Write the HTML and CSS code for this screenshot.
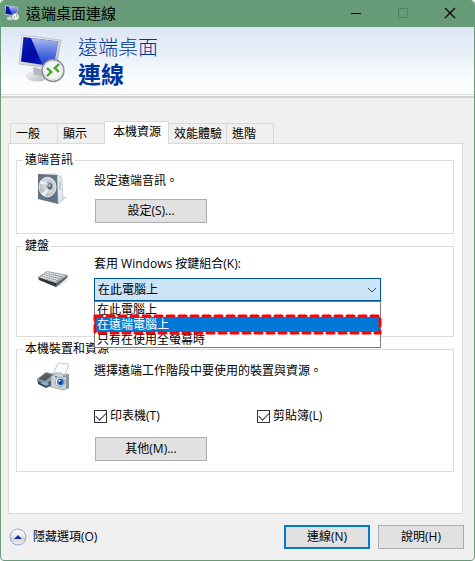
FILE: index.html
```
<!DOCTYPE html>
<html lang="zh-Hant">
<head>
  <meta charset="UTF-8">
  <title>遠端桌面連線</title>
  <link rel="stylesheet" href="styles.css">
</head>
<body>

  <svg class="defs" width="0" height="0" aria-hidden="true">
    <defs>
      <linearGradient id="screen" x1="0" y1="0" x2="1" y2="1">
        <stop offset="0" stop-color="#0a23b8"/>
        <stop offset="0.5" stop-color="#0008a0"/>
        <stop offset="1" stop-color="#1c3fd0"/>
      </linearGradient>
      <linearGradient id="shine" x1="0" y1="0" x2="0" y2="1">
        <stop offset="0" stop-color="#dce7ff"/>
        <stop offset="0.5" stop-color="#6c8cf0"/>
        <stop offset="1" stop-color="#1c3cd8"/>
      </linearGradient>
      <linearGradient id="metal" x1="0" y1="0" x2="1" y2="1">
        <stop offset="0" stop-color="#f4f4f4"/>
        <stop offset="1" stop-color="#b4b8bd"/>
      </linearGradient>
      <radialGradient id="cone" cx="0.6" cy="0.4" r="0.7">
        <stop offset="0" stop-color="#8d959b"/>
        <stop offset="0.4" stop-color="#d5d8da"/>
        <stop offset="1" stop-color="#aab0b5"/>
      </radialGradient>
      <linearGradient id="knob" x1="0" y1="0" x2="0" y2="1">
        <stop offset="0" stop-color="#ffffff"/>
        <stop offset="0.5" stop-color="#e3e5ec"/>
        <stop offset="0.55" stop-color="#c9cdd8"/>
        <stop offset="1" stop-color="#f3f5fa"/>
      </linearGradient>
      <symbol id="remote" viewBox="0 0 48 50">
        <ellipse cx="19" cy="42" rx="11" ry="5.5" fill="url(#metal)"/>
        <path d="M15 33l11 3v6l-10-1z" fill="#b4b8be"/>
        <path d="M4 1l39 5-5 29L1 30z" fill="url(#metal)" stroke="#aeb3b9" stroke-width="0.6"/>
        <path d="M5.500 3l34.500 4.500-4.500 25L3 27.500z" fill="url(#screen)"/>
        <path d="M13 4L40 7.500l-4.500 25-11-1.500z" fill="url(#shine)" opacity="0.8"/>
        <circle cx="35" cy="36.500" r="11" fill="#f4f4f4" stroke="#85898c" stroke-width="1.300"/>
        <circle cx="35" cy="36.500" r="9.300" fill="none" stroke="#dadcdd"/>
        <path d="M29 34l4.200 4-4.200 4M41 30l-4.200 4 4.200 4" fill="none" stroke="#43a52c" stroke-width="2.400"/>
      </symbol>
    </defs>
  </svg>

  <div class="window">
    <header class="titlebar">
      <svg class="title-icon" aria-hidden="true"><use href="#remote"/></svg>
      <span class="title">遠端桌面連線</span>
      <button class="control" type="button" aria-label="最小化">
        <svg width="12" height="12" viewBox="0 0 12 12"><path d="M1 6.500h10" stroke="#000"/></svg>
      </button>
      <button class="control" type="button" aria-label="最大化" disabled>
        <svg width="12" height="12" viewBox="0 0 12 12"><path d="M1.500 1.500h9v9h-9z" fill="none" stroke="#52805f"/></svg>
      </button>
      <button class="control" type="button" aria-label="關閉">
        <svg width="12" height="12" viewBox="0 0 12 12"><path d="M1 1l10 10M11 1L1 11" stroke="#000" stroke-width="1.200"/></svg>
      </button>
    </header>

    <div class="banner">
      <svg class="banner-icon" aria-hidden="true"><use href="#remote"/></svg>
      <h1 class="banner-text">遠端桌面<strong>連線</strong></h1>
    </div>

    <main class="content">
      <div class="tabs" role="tablist">
        <button class="tab" type="button" role="tab">一般</button>
        <button class="tab" type="button" role="tab">顯示</button>
        <button class="tab active" type="button" role="tab" aria-selected="true">本機資源</button>
        <button class="tab" type="button" role="tab">效能體驗</button>
        <button class="tab" type="button" role="tab">進階</button>
      </div>

      <form class="panel" id="options">
        <fieldset class="group audio">
          <legend>遠端音訊</legend>
          <div class="row">
            <svg class="row-icon" viewBox="0 0 32 32" aria-hidden="true">
              <path d="M22 31l8-7-5-1z" fill="#d9dadb"/>
              <path d="M1 1l18-1 6 4 1 22-5 5z" fill="#dfe4e7"/>
              <path d="M20 2l5 3 1 21-5 5z" fill="#e3e8ec" stroke="#b3bdc5" stroke-width="0.600"/>
              <path d="M22 8l2 1v8l-2-1z" fill="#c3ccd3"/>
              <path d="M1 1l19 1 1 29L1 26z" fill="#617385"/>
              <ellipse cx="10.500" cy="14" rx="8.500" ry="9.800" fill="url(#cone)" stroke="#e8eaec"/>
              <path d="M3 11l10 1-9-5zM4 21l9-7-5 9z" fill="#eef0f1"/>
              <ellipse cx="13" cy="13.500" rx="2.400" ry="3.300" fill="#5f6b75"/>
              <ellipse cx="12.500" cy="12.500" rx="1" ry="1.500" fill="#c7cdd1"/>
            </svg>
            <div class="fields">
              <p class="text">設定遠端音訊。</p>
              <button class="button wide" type="button">設定(S)...</button>
            </div>
          </div>
        </fieldset>

        <fieldset class="group keyboard">
          <legend>鍵盤</legend>
          <div class="row">
            <svg class="row-icon" viewBox="0 0 32 32" aria-hidden="true">
              <path d="M18 28l13-8v1l-12 8z" fill="#d5d7d8"/>
              <path d="M1 18l18 6v4L2 21z" fill="#30363a"/>
              <path d="M19 24l12-8-1 3-11 9z" fill="#5b6368"/>
              <path d="M1 18l9-6 21 4-12 8z" fill="#a0a5a8"/>
              <path d="M4 17.800l15 4.400M6 16.300l15 4.400M8 14.800l16 4.200M10 13.500l17 3.500" stroke="#f7f7f7" stroke-width="1.200" stroke-dasharray="1.600 0.700"/>
            </svg>
            <div class="fields">
              <label class="text" for="keys">套用 Windows 按鍵組合(K):</label>
              <div class="combo">
                <select id="keys">
                  <option>在此電腦上</option>
                  <option>在遠端電腦上</option>
                  <option>只有在使用全螢幕時</option>
                </select>
                <svg class="arrow" width="10" height="6" viewBox="0 0 10 6" aria-hidden="true"><path d="M1 1l4 4 4-4" fill="none" stroke="#444"/></svg>
                <ul class="options" role="listbox" aria-label="按鍵組合">
                  <li role="option">在此電腦上</li>
                  <li class="selected" role="option" aria-selected="true">在遠端電腦上
                    <svg class="marker" aria-hidden="true"><rect x="2" y="2" width="285" height="17" fill="none"/></svg>
                  </li>
                  <li role="option">只有在使用全螢幕時</li>
                </ul>
              </div>
            </div>
          </div>
        </fieldset>

        <fieldset class="group devices">
          <legend>本機裝置和資源</legend>
          <div class="row">
            <svg class="row-icon" viewBox="0 0 32 32" aria-hidden="true">
              <path d="M0 17l9-7 9 2-3 13-5-1-10-4z" fill="#929aa1"/>
              <path d="M1 17l8-6 7 2-8 6z" fill="#555c62"/>
              <path d="M1 19l8 3 6-4v5l-6 3-8-4z" fill="#3d444a"/>
              <path d="M3 21l6 3 4-2-6-2z" fill="#79b9ea"/>
              <path d="M16 12l5-11 11 1-4 11z" fill="#fafafa" stroke="#b7bcc0" stroke-width="0.800"/>
              <path d="M14 14l3-1 1-2h6l2 2 6-1v14l-6 2-12-3z" fill="#cdd2d6" stroke="#8d969d" stroke-width="0.700"/>
              <path d="M29 13l3-1v14l-3 1z" fill="#8c969f"/>
              <circle cx="23" cy="20" r="4.800" fill="#eef1f3" stroke="#9aa4ac"/>
              <circle cx="23.500" cy="20" r="3.400" fill="#2671c0"/>
              <circle cx="23.500" cy="20.500" r="1.500" fill="#12346c"/>
              <circle cx="22.500" cy="18.800" r="1" fill="#d6eaff"/>
              <path d="M26 13.500h2.500v1.500H26zM18 14h2v1.500h-2z" fill="#4b83ba"/>
            </svg>
            <div class="fields">
              <p class="text">選擇遠端工作階段中要使用的裝置與資源。</p>
              <div class="checks">
                <label class="check"><input type="checkbox" checked>印表機(T)</label>
                <label class="check"><input type="checkbox" checked>剪貼簿(L)</label>
              </div>
              <button class="button wide" type="button">其他(M)...</button>
            </div>
          </div>
        </fieldset>
      </form>
    </main>

    <footer class="footer">
      <button class="toggle" type="button">
        <svg width="18" height="18" viewBox="0 0 18 18" aria-hidden="true">
          <circle cx="9" cy="9" r="8" fill="url(#knob)" stroke="#96a4c8"/>
          <path d="M5 11l4-4 4 4z" fill="#1d2f94"/>
        </svg>
        隱藏選項(O)
      </button>
      <button class="button primary" type="submit" form="options">連線(N)</button>
      <button class="button" type="button">說明(H)</button>
    </footer>
  </div>

</body>
</html>
```
FILE: styles.css
```
* {
  box-sizing: border-box;
}

body {
  margin: 0;
  background: #fff;
  color: #000;
}

body, button, select {
  font-family: "Open Sans", "Noto Sans CJK TC", sans-serif;
  font-size: 12px;
  line-height: 16px;
}

.defs {
  position: absolute;
}

.window {
  min-height: 100vh;
  display: flex;
  flex-direction: column;
  background: #f0f0f0;
  border: 1px solid #689b78;
  border-radius: 4px;
  overflow: hidden;
}

.titlebar {
  display: flex;
  align-items: center;
  height: 26px;
  padding: 0 1px 2px 3px;
  background: #689b78;
}

.title-icon {
  width: 16px;
  height: 16px;
}

.title {
  flex: 1;
  margin-left: 6px;
  font-size: 15px;
}

.control {
  display: flex;
  align-items: center;
  justify-content: center;
  width: 47px;
  height: 24px;
  padding: 0;
  border: none;
  background: none;
}

.banner {
  display: flex;
  height: 71px;
  padding: 7px 17px 0;
  background: linear-gradient(#dbe5f3, #e8eff9 35%, #fbfdfd 80%, #fbfdfd);
  border-bottom: 2px solid #d2d2d2;
  box-shadow: inset 0 -1px #fbfbfb, inset 0 -2px #dfdfdf;
}

.banner-icon {
  width: 48px;
  height: 50px;
}

.banner-text {
  display: flex;
  flex-direction: column;
  margin: 0 0 0 12px;
  color: #003399;
  font-size: 20px;
  font-weight: 300;
  line-height: 27px;
}

.banner-text strong {
  font-size: 23px;
  font-weight: bold;
}

.content {
  flex: 1;
  padding: 23px 11px 0 7px;
}

.tabs {
  display: flex;
  align-items: flex-end;
  padding-left: 2px;
}

.tab {
  min-width: 48px;
  height: 20px;
  margin-right: -1px;
  padding: 0 4px 0 5px;
  border: 1px solid #d9d9d9;
  border-bottom: none;
  background: #f0f0f0;
  text-align: left;
}

.tab.active {
  position: relative;
  height: 23px;
  margin-bottom: -1px;
  padding: 0 7px 3px 8px;
  background: #fff;
}

.panel {
  padding: 8px 8px 41px 7px;
  border: 1px solid #d9d9d9;
  background: #fff;
}

.group {
  min-width: 0;
  margin: 0 0 4px;
  padding: 0 6px;
  border: 1px solid #dcdcdc;
}

.group legend {
  padding: 0 2px;
}

.audio {
  padding-bottom: 10px;
}

.keyboard {
  padding-bottom: 35px;
}

.devices {
  margin: 0;
  padding-bottom: 10px;
}

.row {
  display: grid;
  grid-template-columns: 71px 1fr;
}

.row-icon {
  width: 32px;
  height: 32px;
  margin: 5px 0 0 14px;
}

.fields {
  padding-top: 5px;
}

.keyboard .fields {
  padding-top: 2px;
}

.devices .fields {
  padding-top: 6px;
}

.text {
  display: block;
  margin: 0;
}

.button {
  width: 86px;
  height: 24px;
  padding: 0;
  border: 1px solid #adadad;
  background: #e1e1e1;
  color: #000;
}

.wide {
  display: block;
  width: 112px;
  margin: 10px 0 0 1px;
}

.primary {
  border: 2px solid #0078d7;
}

.combo {
  position: relative;
  width: 287px;
  max-width: 100%;
  margin-top: 6px;
}

.combo select {
  display: block;
  width: 100%;
  height: 23px;
  padding: 0 20px 0 3px;
  appearance: none;
  border: 1px solid #005499;
  border-radius: 0;
  background: #cce4f7;
  color: #000;
}

.arrow {
  position: absolute;
  top: 9px;
  right: 4px;
}

.options {
  position: absolute;
  z-index: 1;
  top: 100%;
  left: 0;
  width: 100%;
  margin: 0;
  padding: 0;
  border: 1px solid #7a7a7a;
  background: #fff;
  list-style: none;
}

.options li {
  position: relative;
  height: 15px;
  padding-left: 2px;
  line-height: 15px;
}

.options .selected {
  background: #0078d7;
  color: #fff;
}

.marker {
  position: absolute;
  z-index: 1;
  top: -3px;
  left: -2px;
  width: 289px;
  height: 21px;
}

.marker rect {
  stroke: #f00;
  stroke-width: 3px;
  stroke-dasharray: 7 5;
  stroke-linecap: round;
}

.checks {
  display: grid;
  grid-template-columns: 163px 1fr;
  margin-top: 29px;
}

.check {
  display: flex;
  align-items: center;
  gap: 3px;
}

.check input {
  display: flex;
  align-items: center;
  justify-content: center;
  width: 13px;
  height: 13px;
  margin: 0;
  appearance: none;
  border: 1px solid #333;
  background: #fff;
}

.check input:checked::before {
  content: "";
  width: 9px;
  height: 5px;
  margin-bottom: 3px;
  border: solid #333;
  border-width: 0 0 1px 1px;
  transform: rotate(-45deg);
}

.devices .wide {
  margin-top: 13px;
}

.footer {
  display: flex;
  align-items: center;
  gap: 8px;
  padding: 11px 10px 11px 8px;
}

.toggle {
  display: flex;
  align-items: center;
  gap: 6px;
  margin-right: auto;
  padding: 0;
  border: none;
  background: none;
  color: #000;
}
```
